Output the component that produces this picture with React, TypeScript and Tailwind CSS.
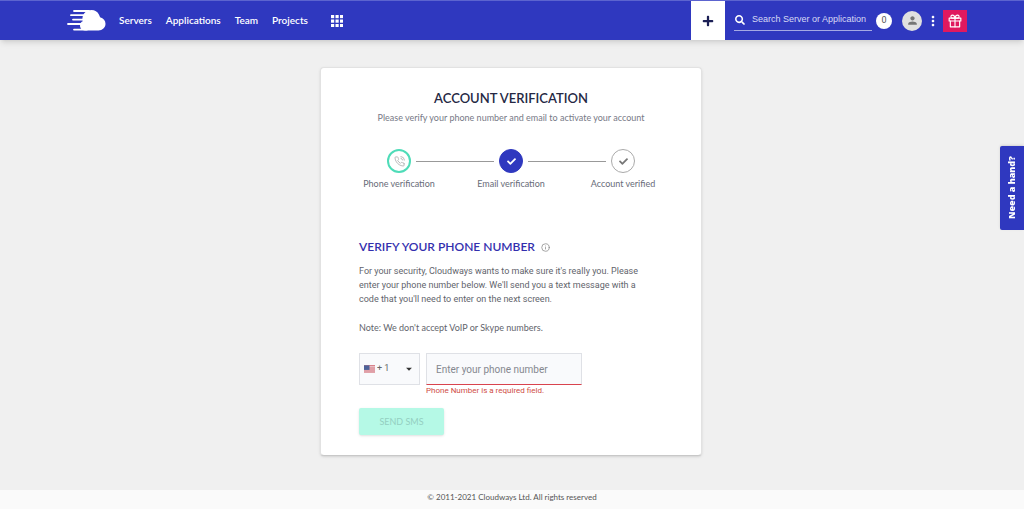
import { useState } from "react"
import type { ReactNode } from "react"
import { MdMoreVert, MdPerson, MdArrowDropDown } from "react-icons/md"
import { FaCheck, FaPlus, FaSearch } from "react-icons/fa"
import { FiGift, FiInfo, FiPhoneCall } from "react-icons/fi"

const navLinks = ["Servers", "Applications", "Team", "Projects"]

function CloudLogo() {
  return (
    <svg viewBox="0 0 39 21" className="h-[21px] w-[39px]" aria-hidden="true">
      <path
        d="M7 1h15M4 5.200h14M6 9.600h11M1 14h14M7 19.600h13"
        stroke="#fff"
        strokeWidth="1.800"
        strokeLinecap="round"
      />
      <path
        d="M24.500.1c3.300 0 6 1.700 7.400 4.400.500 1 .900 1.800 1.200 2.800 3.400.800 5.400 3.500 5.400 6.500 0 3.900-3.100 6.700-7 6.700H18c-3.200 0-5-2.300-5-4.900 0-2.200 1.200-3.700 3-4.500-.6-.6-.7-1.500-.6-2.400C15.700 3.500 19.700.1 24.500.1z"
        fill="#fff"
      />
    </svg>
  )
}

function AppsIcon() {
  return (
    <svg viewBox="0 0 12 12" className="size-3" fill="currentColor" aria-hidden="true">
      {[0, 4.500, 9].map((y) =>
        [0, 4.500, 9].map((x) => <rect key={`${x}-${y}`} x={x} y={y} width="3.200" height="3.200" />)
      )}
    </svg>
  )
}

function UsFlag() {
  return (
    <svg viewBox="0 0 12 8" className="pointer-events-none absolute left-1 h-2 w-[11px]" aria-hidden="true">
      <rect width="12" height="8" fill="#f1dfe2" />
      <path d="M0 .5h12M0 2.800h12M0 5.100h12M0 7.400h12" stroke="#d0606c" strokeWidth="1.100" />
      <rect width="6" height="5" fill="#4d6299" />
    </svg>
  )
}

function Header() {
  return (
    <header className="flex h-10 items-stretch border-t border-[#5c64cf] bg-[#2f38bf] pl-[67px] text-white shadow-md">
      <a href="#home" aria-label="Home" className="flex items-center">
        <CloudLogo />
      </a>
      <nav className="ml-[13px] flex items-center gap-[14px] font-['Lato','Open_Sans',sans-serif] text-[10px] font-semibold">
        {navLinks.map((link) => (
          <a key={link} href={`#${link.toLowerCase()}`}>
            {link}
          </a>
        ))}
      </nav>
      <button type="button" aria-label="Apps" className="ml-[23px]">
        <AppsIcon />
      </button>

      <div className="ml-auto flex items-center pr-[57px]">
        <button type="button" aria-label="Add" className="flex h-full w-[34px] items-center justify-center bg-white text-[#1b1f55]">
          <FaPlus size={12} />
        </button>
        <label className="ml-[9px] flex h-5 w-[138px] items-center border-b border-[#a5a9e4]">
          <FaSearch size={10} className="ml-px shrink-0" />
          <input
            type="text"
            aria-label="Search Server or Application"
            placeholder="Search Server or Application"
            className="ml-[7px] min-w-0 flex-1 bg-transparent font-['Liberation_Sans',sans-serif] text-[9px] outline-none placeholder:text-[#d9dbf5]"
          />
        </label>
        <span className="ml-1 flex size-4 items-center justify-center rounded-full bg-white font-['Roboto',sans-serif] text-[9px] text-[#555]">
          0
        </span>
        <button type="button" aria-label="Account" className="ml-[10px] flex size-5 items-center justify-center rounded-full bg-[#e0e0e0] text-[#757575]">
          <MdPerson size={13} />
        </button>
        <button type="button" aria-label="More" className="ml-1 flex w-[14px] justify-center">
          <MdMoreVert size={16} className="shrink-0" />
        </button>
        <button type="button" aria-label="Rewards" className="ml-[3px] flex h-[22px] w-6 items-center justify-center bg-[#e0195f]">
          <FiGift size={14} />
        </button>
      </div>
    </header>
  )
}

function Step({
  label,
  circle,
  icon,
  before,
  after,
}: {
  label: string
  circle: string
  icon: ReactNode
  before: string
  after: string
}) {
  return (
    <li className="flex flex-col items-center">
      <div className="flex w-full items-center gap-[5px]">
        <span className={`h-px flex-1 ${before}`} />
        <span className={`flex size-6 items-center justify-center rounded-full border ${circle}`}>{icon}</span>
        <span className={`h-px flex-1 ${after}`} />
      </div>
      <span className="mt-[5px] text-[9px] leading-3 text-[#686b78]">{label}</span>
    </li>
  )
}

function Steps() {
  return (
    <ol className="mt-[25px] grid grid-cols-3 px-[22px]">
      <Step
        label="Phone verification"
        circle="border-2 border-[#4fdcb8] text-[#b5b5b5]"
        icon={<FiPhoneCall size={11} />}
        before="bg-transparent"
        after="bg-[#999]"
      />
      <Step
        label="Email verification"
        circle="border-[#2f38bf] bg-[#2f38bf] text-white"
        icon={<FaCheck size={9} />}
        before="bg-[#999]"
        after="bg-[#999]"
      />
      <Step
        label="Account verified"
        circle="border-[#aaa] text-[#777]"
        icon={<FaCheck size={9} />}
        before="bg-[#999]"
        after="bg-transparent"
      />
    </ol>
  )
}

function PhoneForm() {
  const [phone, setPhone] = useState("")

  return (
    <form className="mt-[18px]" onSubmit={(e) => e.preventDefault()}>
      <div className="flex items-start gap-[6px]">
        <div className="relative flex h-8 w-[61px] items-center border border-[#dfe1e6] bg-[#f9fafc]">
          <UsFlag />
          <select
            aria-label="Country code"
            className="h-full w-full appearance-none bg-transparent pl-[17px] font-['Roboto',sans-serif] text-[9px] text-[#666] outline-none"
          >
            <option>+ 1</option>
          </select>
          <MdArrowDropDown size={14} className="pointer-events-none absolute right-[3px] text-[#333]" />
        </div>
        <div className="flex flex-col">
          <input
            type="tel"
            aria-label="Phone number"
            aria-describedby="phone-error"
            placeholder="Enter your phone number"
            value={phone}
            onChange={(e) => setPhone(e.target.value)}
            className="h-8 w-[156px] border border-[#dfe1e6] border-b-[#d9434e] bg-[#f9fafc] px-[9px] font-['Roboto',sans-serif] text-[10px] outline-none placeholder:text-[#85888f]"
          />
          <p id="phone-error" className="font-['Roboto',sans-serif] text-[8px] leading-3 text-[#cf4c45]">
            Phone Number is a required field.
          </p>
        </div>
      </div>
      <button
        type="submit"
        className="mt-[11px] h-[27px] w-[85px] rounded-xs bg-[#b5f9e6] text-[9px] text-[#94cfc1] shadow"
      >
        SEND SMS
      </button>
    </form>
  )
}

export default function App() {
  return (
    <div className="flex min-h-screen flex-col bg-[#f0f0f0] font-['Lato','Open_Sans',sans-serif]">
      <Header />

      <main className="flex flex-1 justify-center pt-[27px] pr-5 pb-[34px] pl-[18px]">
        <div className="w-full max-w-[382px] self-start rounded-sm border border-[#e2e2e2] border-b-[#c8c8c8] bg-white pt-[22px] pb-5 shadow">
          <h1 className="text-center text-[13px] leading-4 font-semibold text-[#252844]">ACCOUNT VERIFICATION</h1>
          <p className="mt-[6px] text-center text-[9px] leading-3 text-[#777986]">
            Please verify your phone number and email to activate your account
          </p>
          <Steps />

          <section className="mt-[49px] px-[38px]">
            <h2 className="flex items-center gap-[6px] text-[12px] leading-4 font-semibold text-[#332fae]">
              VERIFY YOUR PHONE NUMBER
              <FiInfo size={9} className="text-[#888]" />
            </h2>
            <p className="mt-[9px] pr-3 font-['Roboto',sans-serif] text-[9px] leading-[14px] text-[#62646c]">
              For your security, Cloudways wants to make sure it's really you. Please enter your phone number below.
              We'll send you a text message with a code that you'll need to enter on the next screen.
            </p>
            <p className="mt-[15px] text-[9px] leading-[14px] text-[#62646c]">
              Note: We don't accept VoIP or Skype numbers.
            </p>
            <PhoneForm />
          </section>
        </div>
      </main>

      <footer className="bg-[#fafafa] pb-[6px] text-center text-[8px] leading-[14px] text-[#555]">
        © 2011-2021 Cloudways Ltd. All rights reserved
      </footer>

      {/* Help tab */}
      <button
        type="button"
        className="fixed top-[146px] right-0 flex h-[84px] w-6 rotate-180 items-center justify-center rounded-r-xs bg-[#2f38bf] font-['Open_Sans',sans-serif] text-[9px] font-extrabold text-white shadow [writing-mode:vertical-rl]"
      >
        Need a hand?
      </button>
    </div>
  )
}
